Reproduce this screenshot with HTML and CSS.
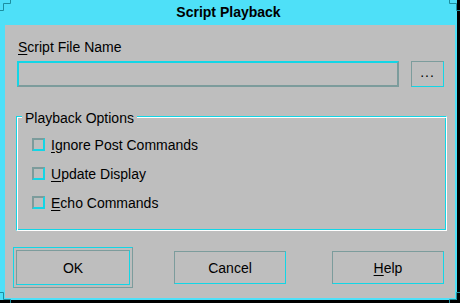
FILE: index.html
```html
<!DOCTYPE html>
<html lang="en">
<head>
    <meta charset="UTF-8">
    <meta name="viewport" content="width=device-width, initial-scale=1.0">
    <title>Script Playback</title>
    <link rel="stylesheet" href="styles.css">
</head>
<body>
    <div class="window">
        <div class="titlebar">Script Playback</div>

        <div class="client">
            <div class="field-label"><u>S</u>cript File Name</div>
            <div class="file-row">
                <div class="text-field"></div>
                <button class="browse-btn">...</button>
            </div>

            <div class="group">
                <span class="group-title">Playback Options</span>
                <div class="check-row"><span class="check"></span><span><u>I</u>gnore Post Commands</span></div>
                <div class="check-row"><span class="check"></span><span><u>U</u>pdate Display</span></div>
                <div class="check-row"><span class="check"></span><span><u>E</u>cho Commands</span></div>
            </div>

            <div class="button-row">
                <div class="default-ring"><button class="btn btn-ok">OK</button></div>
                <button class="btn btn-cancel">Cancel</button>
                <button class="btn btn-help"><u>H</u>elp</button>
            </div>
        </div>

        <!-- resize handles in the frame corners -->
        <svg class="corner corner-tl" width="12" height="12"><path d="M10.5 0V3.5H3.5V10.5H0" /></svg>
        <svg class="corner corner-tr" width="12" height="12"><path d="M1.5 0V3.5H8.5V10.5H12" /></svg>
        <svg class="corner corner-bl" width="12" height="12"><path d="M10.5 12V8.5H3.5V1.5H0" /></svg>
        <svg class="corner corner-br" width="12" height="12"><path d="M1.5 12V8.5H8.5V1.5H12" /></svg>
    </div>
</body>
</html>
```

FILE: styles.css
```css
body {
    margin: 0;
    background-color: #000;
    font-family: "Liberation Sans", Arial, sans-serif;
    font-size: 14px;
    color: #000;
}
.window {
    position: relative;
    width: 460px;
    height: 303px;
    box-sizing: border-box;
    display: flex;
    flex-direction: column;
    background-color: #4ee0f8;
    border-right: 3px solid #000;
    border-bottom: 3px solid #000;
}
.titlebar {
    height: 25px;
    line-height: 24px;
    text-align: center;
    font-weight: bold;
    flex-shrink: 0;
}
.client {
    flex: 1;
    margin: 0 2px 2px 5px;
    background-color: #bebebe;
    display: flex;
    flex-direction: column;
}
u {
    text-decoration-thickness: 1px;
    text-underline-offset: 2px;
}
.field-label {
    margin: 14px 0 0 13px;
    line-height: 16px;
}
.file-row {
    display: flex;
    margin: 6px 0 0 12px;
    gap: 12px;
}
.text-field {
    width: 382px;
    height: 26px;
    box-sizing: border-box;
    border: 2px solid;
    border-color: #12d6e6 #7c9c9c #7c9c9c #12d6e6;
}
.browse-btn {
    width: 33px;
    height: 26px;
    box-sizing: border-box;
    padding: 0 0 4px;
    background-color: #bebebe;
    border: 1px solid;
    border-color: #7c9c9c #12d6e6 #12d6e6 #7c9c9c;
    font-family: inherit;
    font-size: 14px;
    letter-spacing: 1px;
}
.group {
    position: relative;
    margin: 29px 0 0 11px;
    width: 431px;
    height: 115px;
    box-sizing: border-box;
    padding: 13px 0 0 15px;
    border: 1px solid;
    border-color: #12d6e6 #fff #fff #12d6e6;
    box-shadow: inset 1px 1px 0 #fff, inset -1px -1px 0 #12d6e6;
}
.group-title {
    position: absolute;
    top: -7px;
    left: 5px;
    padding: 0 3px;
    line-height: 16px;
    background-color: #bebebe;
}
.check-row {
    display: flex;
    align-items: center;
    gap: 6px;
    height: 29px;
    line-height: 16px;
}
.check {
    width: 13px;
    height: 13px;
    box-sizing: border-box;
    border: 2px solid;
    border-color: #7c9c9c #12d6e6 #12d6e6 #7c9c9c;
}
.button-row {
    display: flex;
    align-items: center;
    margin: 16px 0 0 8px;
}
.default-ring {
    width: 120px;
    height: 41px;
    box-sizing: border-box;
    padding: 2px;
    border: 1px solid;
    border-color: #12d6e6 #7c9c9c #7c9c9c #12d6e6;
}
.btn {
    width: 112px;
    height: 33px;
    box-sizing: border-box;
    padding: 0;
    background-color: #bebebe;
    border: 1px solid;
    border-color: #7c9c9c #12d6e6 #12d6e6 #7c9c9c;
    font-family: inherit;
    font-size: 14px;
    color: #000;
}
.btn-ok {
    width: 114px;
    height: 35px;
}
.btn-cancel {
    margin-left: 41px;
}
.btn-help {
    margin-left: 46px;
}
.corner {
    position: absolute;
}
.corner path {
    fill: none;
    stroke: #1d8fa0;
    stroke-width: 1;
}
.corner-tl { top: 0; left: 0; }
.corner-tr { top: 0; right: -3px; }
.corner-bl { bottom: -3px; left: 0; }
.corner-br { bottom: -3px; right: -3px; }
```
